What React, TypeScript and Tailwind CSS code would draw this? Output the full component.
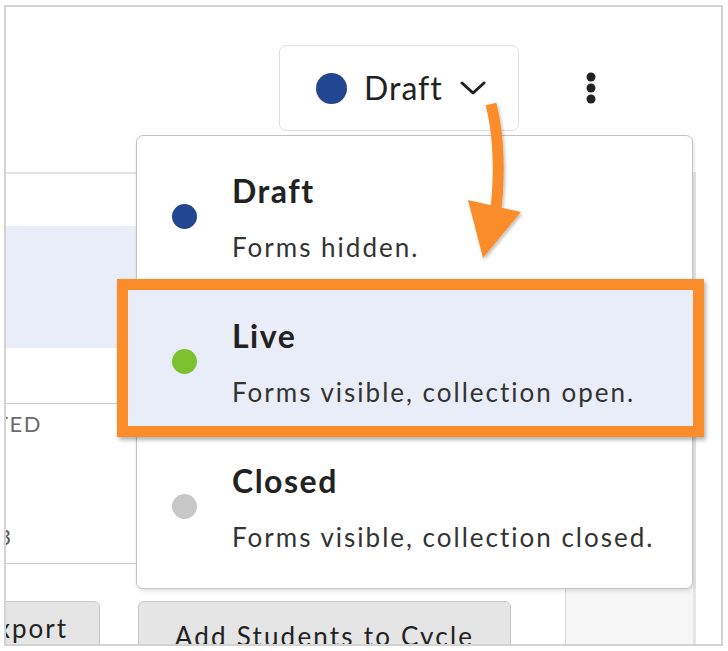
import React from 'react';

type Option = {
  name: string;
  desc: string;
  dot: string;
  active: boolean;
};

const options: Option[] = [
  { name: 'Draft', desc: 'Forms hidden.', dot: 'bg-[#22468f]', active: false },
  { name: 'Live', desc: 'Forms visible, collection open.', dot: 'bg-[#7cc22f]', active: true },
  { name: 'Closed', desc: 'Forms visible, collection closed.', dot: 'bg-[#c7c7c7]', active: false },
];

const StatusRow: React.FC<{ option: Option }> = ({ option }) => (
  <div className="relative h-[145px] flex items-start pl-[35px]">
    {/* annotation box around the live option */}
    {option.active && (
      <div className="absolute -left-[20px] -top-[3px] -right-[12px] -bottom-[10px] border-[11px] border-[#fb8c2a] bg-[#e9edf8] shadow-[2px_3px_4px_rgba(0,0,0,0.3)]" />
    )}
    <span className={`relative z-10 mt-[67px] w-[25px] h-[25px] rounded-full shrink-0 ${option.dot}`} />
    <div className="relative z-10 ml-[35px] pt-[35px]">
      <div className="text-[32px] leading-[38px] font-bold tracking-[1.5px] text-[#222222]">{option.name}</div>
      <div className="mt-[21px] text-[26px] leading-[32px] tracking-[2px] text-[#333333] whitespace-nowrap">{option.desc}</div>
    </div>
  </div>
);

const App: React.FC = () => {
  return (
    <div className="w-[728px] h-[651px] bg-white pl-[4px] pt-[5px] font-['Lato','Liberation_Sans',sans-serif]">
      <div className="relative w-[719px] h-[641px] border-2 border-[#d3d3d3] overflow-hidden flex flex-col">
        {/* Header */}
        <div className="h-[165px] shrink-0 pt-[38px] pl-[273px] flex items-start">
          <div className="flex items-center">
            <button className="h-[86px] w-[240px] border-[1.5px] border-[#dedede] rounded-[7px] flex items-center pl-[36px] bg-white">
              <span className="w-[31px] h-[31px] rounded-full bg-[#22468f]" />
              <span className="ml-[17px] text-[32px] leading-[38px] tracking-[1px] text-[#222222]">Draft</span>
              <svg className="ml-[17px]" width="26" height="16" viewBox="0 0 26 16" fill="none">
                <path d="M2 3 L13 13 L24 3" stroke="#222222" strokeWidth="3" strokeLinecap="round" strokeLinejoin="round" />
              </svg>
            </button>
            <svg className="ml-[66px]" width="12" height="34" viewBox="0 0 12 34">
              <circle cx="6" cy="6" r="4.5" fill="#222222" />
              <circle cx="6" cy="17" r="4.5" fill="#222222" />
              <circle cx="6" cy="28" r="4.5" fill="#222222" />
            </svg>
          </div>
        </div>

        {/* Card behind the menu */}
        <div className="flex-1 flex flex-col w-[690px] border-t-2 border-t-[#e3e3e3] border-r-[3px] border-r-[#e6e6e6]">
          <div className="h-[52px] shrink-0" />
          <div className="h-[122px] shrink-0 bg-[#e9edf8]" />
          <div className="h-[56px] shrink-0 border-b border-[#cccccc]" />
          <div className="h-[160px] shrink-0 border-b border-[#cccccc] flex flex-col">
            <div className="pt-[7px] w-[36px] flex justify-end overflow-hidden">
              <span className="whitespace-nowrap text-[22px] leading-[26px] tracking-[1.5px] text-[#6b6b6b]">COMPLETED</span>
            </div>
            <div className="mt-[87px] w-[5px] flex justify-end overflow-hidden">
              <span className="whitespace-nowrap text-[22px] leading-[26px] text-[#555555]">23</span>
            </div>
          </div>
          <div className="flex-1 flex">
            <div className="flex-1 pt-[37px] flex items-start">
              <button className="-ml-[46px] w-[140px] h-[60px] pt-[10px] pr-[31px] flex justify-end bg-[#e5e5e5] border-[1.5px] border-[#c8c8c8] rounded-[6px] text-[26px] leading-[32px] tracking-[2px] text-[#222222]">
                Export
              </button>
              <button className="ml-[38px] w-[373px] h-[60px] pt-[10px] text-center bg-[#e5e5e5] border-[1.5px] border-[#c8c8c8] rounded-[6px] text-[26px] leading-[32px] tracking-[2.2px] text-[#222222]">
                Add Students to Cycle
              </button>
            </div>
            <div className="w-[128px] bg-[#f6f6f6] border-l border-[#d9d9d9]" />
          </div>
        </div>

        {/* Status menu */}
        <div className="absolute left-[130px] top-[128px] w-[557px] h-[454px] bg-white border-[1.5px] border-[#c4c4c4] rounded-[7px] shadow-[1px_2px_4px_rgba(0,0,0,0.12)] pt-[1px]">
          {options.map((o) => (
            <StatusRow key={o.name} option={o} />
          ))}
        </div>

        {/* Annotation arrow */}
        <svg className="absolute left-0 top-0 pointer-events-none" width="715" height="637" viewBox="6 7 715 637">
          <defs>
            <filter id="sh" x="-20%" y="-20%" width="150%" height="150%">
              <feDropShadow dx="1.5" dy="2" stdDeviation="1.5" floodColor="#000000" floodOpacity="0.25" />
            </filter>
          </defs>
          <g filter="url(#sh)">
            <path d="M491 104 C 499 135, 500 175, 496 208" stroke="#fb8c2a" strokeWidth="11" fill="none" />
            <polygon points="468,200 521,212 483,258" fill="#fb8c2a" />
          </g>
        </svg>
      </div>
    </div>
  );
};

export default App;
